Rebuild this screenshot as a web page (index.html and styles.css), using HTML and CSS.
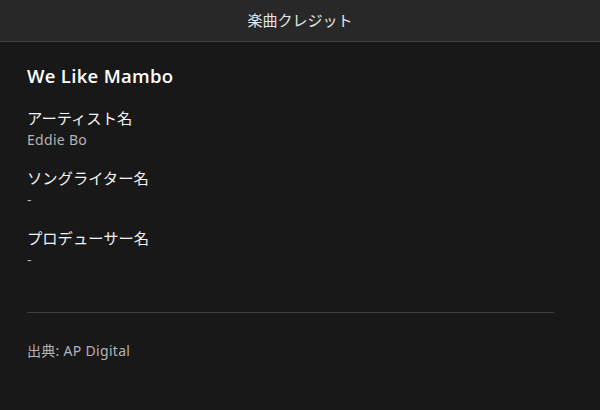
FILE: index.html
```html
<!DOCTYPE html>
<html lang="ja">
<head>
    <meta charset="UTF-8">
    <meta name="viewport" content="width=device-width, initial-scale=1.0">
    <title>楽曲クレジット</title>
    <link rel="stylesheet" href="styles.css">
</head>
<body>

<div class="dialog">
    <div class="dialog-header">楽曲クレジット</div>
    <div class="dialog-body">
        <div class="track-title">We Like Mambo</div>

        <div class="credit">
            <div class="credit-label">アーティスト名</div>
            <div class="credit-value">Eddie Bo</div>
        </div>
        <div class="credit">
            <div class="credit-label">ソングライター名</div>
            <div class="credit-value">-</div>
        </div>
        <div class="credit">
            <div class="credit-label">プロデューサー名</div>
            <div class="credit-value">-</div>
        </div>

        <hr class="divider">
        <div class="source">出典: AP Digital</div>
    </div>
</div>

</body>
</html>
```

FILE: styles.css
```css
body {
    margin: 0;
    background-color: #181818;
    font-family: "Noto Sans", "Noto Sans CJK JP", sans-serif;
    color: #ffffff;
}

.dialog {
    width: 600px;
    height: 410px;
    background-color: #181818;
}

.dialog-header {
    height: 41px;
    line-height: 41px;
    background-color: #282828;
    border-bottom: 1px solid #3e3e3e;
    text-align: center;
    font-size: 15px;
    color: #e6e6e6;
}

.dialog-body {
    padding: 22px 46px 0 27px;
}

.track-title {
    font-family: "Open Sans", "Noto Sans CJK JP", sans-serif;
    font-size: 18.5px;
    font-weight: 600;
    letter-spacing: 0.3px;
    line-height: 24px;
    margin-bottom: 20px;
}

.credit {
    margin-bottom: 18px;
}

.credit-label {
    font-size: 15.3px;
    line-height: 20px;
    color: #f2f2f2;
}

.credit-value {
    font-size: 14px;
    letter-spacing: 0.3px;
    line-height: 20px;
    padding-top: 2px;
    color: #b3b3b3;
}

.divider {
    border: none;
    border-top: 1px solid #3e3e3e;
    margin: 42px 0 28px 0;
}

.source {
    font-size: 14px;
    letter-spacing: 0.3px;
    line-height: 20px;
    color: #b3b3b3;
}
```
